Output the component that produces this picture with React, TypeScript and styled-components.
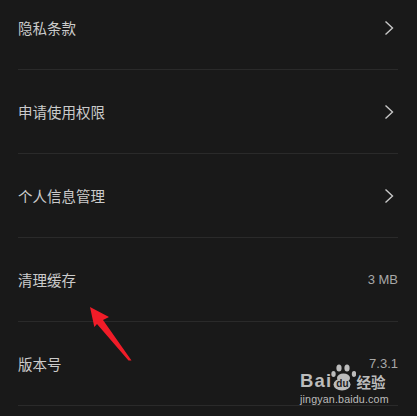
import React from "react";
import { createGlobalStyle, styled } from "styled-components";

const GlobalStyle = createGlobalStyle`
  html, body {
    margin: 0;
    padding: 0;
    background: #191919;
  }
`;

const Page = styled.div`
  position: relative;
  width: 417px;
  height: 416px;
  overflow: hidden;
  background: #191919;
  font-family: "Noto Sans CJK SC", "Liberation Sans", sans-serif;
`;

const List = styled.div`
  display: flex;
  flex-direction: column;
  margin: -14px 19px 0 18px;
`;

const Row = styled.div`
  display: flex;
  align-items: center;
  justify-content: space-between;
  height: 83px;
  border-bottom: 1px solid #2a2a2a;
`;

const Label = styled.span`
  font-size: 14.5px;
  color: #cbcbcb;
`;

const Value = styled.span`
  font-family: "Liberation Sans", sans-serif;
  font-size: 13px;
  color: #a8a8a8;
`;

const Chevron = styled.svg`
  width: 10px;
  height: 16px;
  margin-right: 4px;
`;

const Arrow = styled.svg`
  position: absolute;
  left: 88px;
  top: 305px;
  width: 46px;
  height: 58px;
`;

const Watermark = styled.div`
  position: absolute;
  left: 300px;
  top: 362px;
  width: 92px;
  display: flex;
  flex-direction: column;
  color: #bcbcbc;
`;

const LogoRow = styled.div`
  display: flex;
  align-items: flex-end;
  height: 30px;
`;

const LogoText = styled.span`
  font-family: "Liberation Sans", sans-serif;
  font-size: 18.5px;
  font-weight: 700;
  line-height: 22px;
  letter-spacing: 1.2px;
`;

const PawBox = styled.div`
  position: relative;
  width: 25px;
  height: 30px;
  flex: none;
  margin-left: -1px;
`;

const Paw = styled.svg`
  position: absolute;
  left: 0;
  top: 0;
  width: 25px;
  height: 30px;
`;

const Du = styled.span`
  position: absolute;
  left: 2px;
  top: 16px;
  width: 18px;
  text-align: center;
  font-family: "Liberation Sans", sans-serif;
  font-size: 10px;
  font-weight: 700;
  line-height: 12px;
  color: #1c1c1c;
`;

const LogoCn = styled.span`
  font-size: 14.5px;
  font-weight: 700;
  line-height: 20px;
  white-space: nowrap;
`;

const Domain = styled.span`
  font-family: "Liberation Sans", sans-serif;
  font-size: 10.7px;
  line-height: 12px;
  letter-spacing: 0.15px;
  margin-top: 1px;
  white-space: nowrap;
`;

const rows = [
  { label: "隐私条款" },
  { label: "申请使用权限" },
  { label: "个人信息管理" },
  { label: "清理缓存", value: "3 MB" },
  { label: "版本号", value: "7.3.1" },
];

function App() {
  return (
    <Page>
      <GlobalStyle />
      <List>
        {rows.map((row) => (
          <Row key={row.label}>
            <Label>{row.label}</Label>
            {row.value ? (
              <Value>{row.value}</Value>
            ) : (
              <Chevron viewBox="0 0 10 16">
                <path d="M1.5 1.5 L8.5 8 L1.5 14.5" fill="none" stroke="#c8c8c8" strokeWidth="1.4" />
              </Chevron>
            )}
          </Row>
        ))}
      </List>
      <Arrow viewBox="88 305 46 58">
        <path d="M90 307 L109 317 L103 320 L131.5 360.5 L128.5 360.5 L97 324 L94.3 327 Z" fill="#f01c28" />
      </Arrow>
      <Watermark>
        <LogoRow>
          <LogoText>Bai</LogoText>
          <PawBox>
            <Paw viewBox="0 0 25 30">
              <ellipse cx="2.5" cy="12" rx="2.2" ry="3" fill="#bcbcbc" />
              <ellipse cx="8" cy="6" rx="2.6" ry="3.6" fill="#bcbcbc" />
              <ellipse cx="16" cy="6" rx="2.6" ry="3.6" fill="#bcbcbc" />
              <ellipse cx="23" cy="12" rx="2.2" ry="3" fill="#bcbcbc" />
              <ellipse cx="12.5" cy="16" rx="6.5" ry="4.5" fill="#bcbcbc" />
              <ellipse cx="11" cy="22.5" rx="8.5" ry="6" fill="#bcbcbc" />
            </Paw>
            <Du>du</Du>
          </PawBox>
          <LogoCn>经验</LogoCn>
        </LogoRow>
        <Domain>jingyan.baidu.com</Domain>
      </Watermark>
    </Page>
  );
}

export default App;
